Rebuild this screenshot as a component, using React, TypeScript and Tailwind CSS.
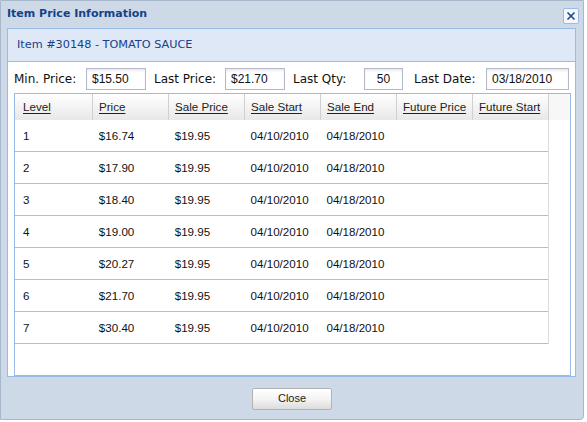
import React from 'react';

const columns = [
  { label: 'Level', w: 'w-[78px]', pl: 'pl-[8px]' },
  { label: 'Price', w: 'w-[76px]', pl: 'pl-[6px]' },
  { label: 'Sale Price', w: 'w-[76px]', pl: 'pl-[6px]' },
  { label: 'Sale Start', w: 'w-[76px]', pl: 'pl-[6px]' },
  { label: 'Sale End', w: 'w-[76px]', pl: 'pl-[6px]' },
  { label: 'Future Price', w: 'w-[76px]', pl: 'pl-[6px]' },
  { label: 'Future Start', w: 'w-[76px]', pl: 'pl-[6px]' },
];

const rows = [
  ['1', '$16.74'],
  ['2', '$17.90'],
  ['3', '$18.40'],
  ['4', '$19.00'],
  ['5', '$20.27'],
  ['6', '$21.70'],
  ['7', '$30.40'],
].map(([level, price]) => [level, price, '$19.95', '04/10/2010', '04/18/2010', '', '']);

const Field = ({ label, value, lw, iw, center }: { label: string; value: string; lw: string; iw: string; center?: boolean }) => (
  <div className="flex items-center">
    <span className={`${lw} text-[12px] text-[#111] font-['DejaVu_Sans',sans-serif]`}>{label}</span>
    <div
      className={`${iw} h-[22px] border border-[#b5b8c8] bg-white shadow-[inset_0_2px_2px_rgba(0,0,0,0.08)] flex items-center text-[12px] text-[#111] font-['Liberation_Sans',Arial,sans-serif] ${center ? 'justify-center' : 'pl-[5px]'}`}
    >
      {value}
    </div>
  </div>
);

const App = () => {
  return (
    <div className="w-[587px] h-[422px] bg-white">
      <div className="w-[584px] h-[420px] bg-[#ced9e7] border border-[#a7b8cc] rounded-br-[4px] flex flex-col">
        {/* title bar */}
        <div className="h-[27px] flex items-center justify-between pl-[6px] pr-[4px]">
          <span className="text-[11px] font-bold text-[#15428b] font-['DejaVu_Sans',sans-serif]">Item Price Information</span>
          <div className="w-[16px] h-[16px] mt-[2px] bg-[#f3f7fc] border border-[#99bbe8] rounded-[2px] flex items-center justify-center">
            <svg width="10" height="10" viewBox="0 0 10 10">
              <path d="M1.5 1.5 L8.5 8.5 M8.5 1.5 L1.5 8.5" stroke="#15428b" strokeWidth="1.5" />
            </svg>
          </div>
        </div>

        {/* panel */}
        <div className="ml-[6px] mr-[7px] h-[349px] border border-[#99bbe8] bg-white flex flex-col">
          <div className="h-[33px] bg-[#dfe8f6] border-b border-[#99bbe8] flex items-center pl-[9px]">
            <span className="text-[11.25px] text-[#15428b] font-['DejaVu_Sans',sans-serif]">Item #30148 - TOMATO SAUCE</span>
          </div>
          <div className="flex-1 flex flex-col pl-[6px] pr-[4px] pt-[6px]">
            <div className="flex items-center">
              <Field label="Min. Price:" value="$15.50" lw="w-[72px]" iw="w-[60px]" />
              <div className="w-[8px]" />
              <Field label="Last Price:" value="$21.70" lw="w-[71px]" iw="w-[60px]" />
              <div className="w-[8px]" />
              <Field label="Last Qty:" value="50" lw="w-[71px]" iw="w-[39px]" center />
              <div className="w-[11px]" />
              <Field label="Last Date:" value="03/18/2010" lw="w-[72px]" iw="w-[83px]" />
            </div>

            {/* grid */}
            <div className="mt-[3px] flex-1 border border-[#99bbe8] flex flex-col font-['Liberation_Sans',Arial,sans-serif] text-[11.6px]">
              <div className="h-[26px] flex bg-gradient-to-b from-white to-[#e8e8e8]">
                {columns.map((c) => (
                  <div key={c.label} className={`${c.w} ${c.pl} h-full border-r border-[#d0d0d0] flex items-center text-[#222]`}>
                    <span className="underline underline-offset-[2px]">{c.label}</span>
                  </div>
                ))}
                <div className="flex-1 bg-[#f7f7f7]" />
              </div>
              <div className="w-[534px] border-r border-[#dcdcdc]">
                {rows.map((r, i) => (
                  <div key={i} className="h-[32px] flex items-center border-b border-[#a9bfdc] text-[#111]">
                    {r.map((v, j) => (
                      <div key={j} className={`${columns[j].w} ${columns[j].pl}`}>{v}</div>
                    ))}
                  </div>
                ))}
              </div>
            </div>
          </div>
        </div>

        {/* footer */}
        <div className="flex-1 flex items-center justify-center">
          <button className="w-[80px] h-[22px] mt-[1px] border border-[#b3b3b3] rounded-[2px] bg-gradient-to-b from-white via-[#f4f4f4] to-[#dcdcdc] text-[11px] text-[#222] font-['Liberation_Sans',Arial,sans-serif]">
            Close
          </button>
        </div>
      </div>
    </div>
  );
};

export default App;
